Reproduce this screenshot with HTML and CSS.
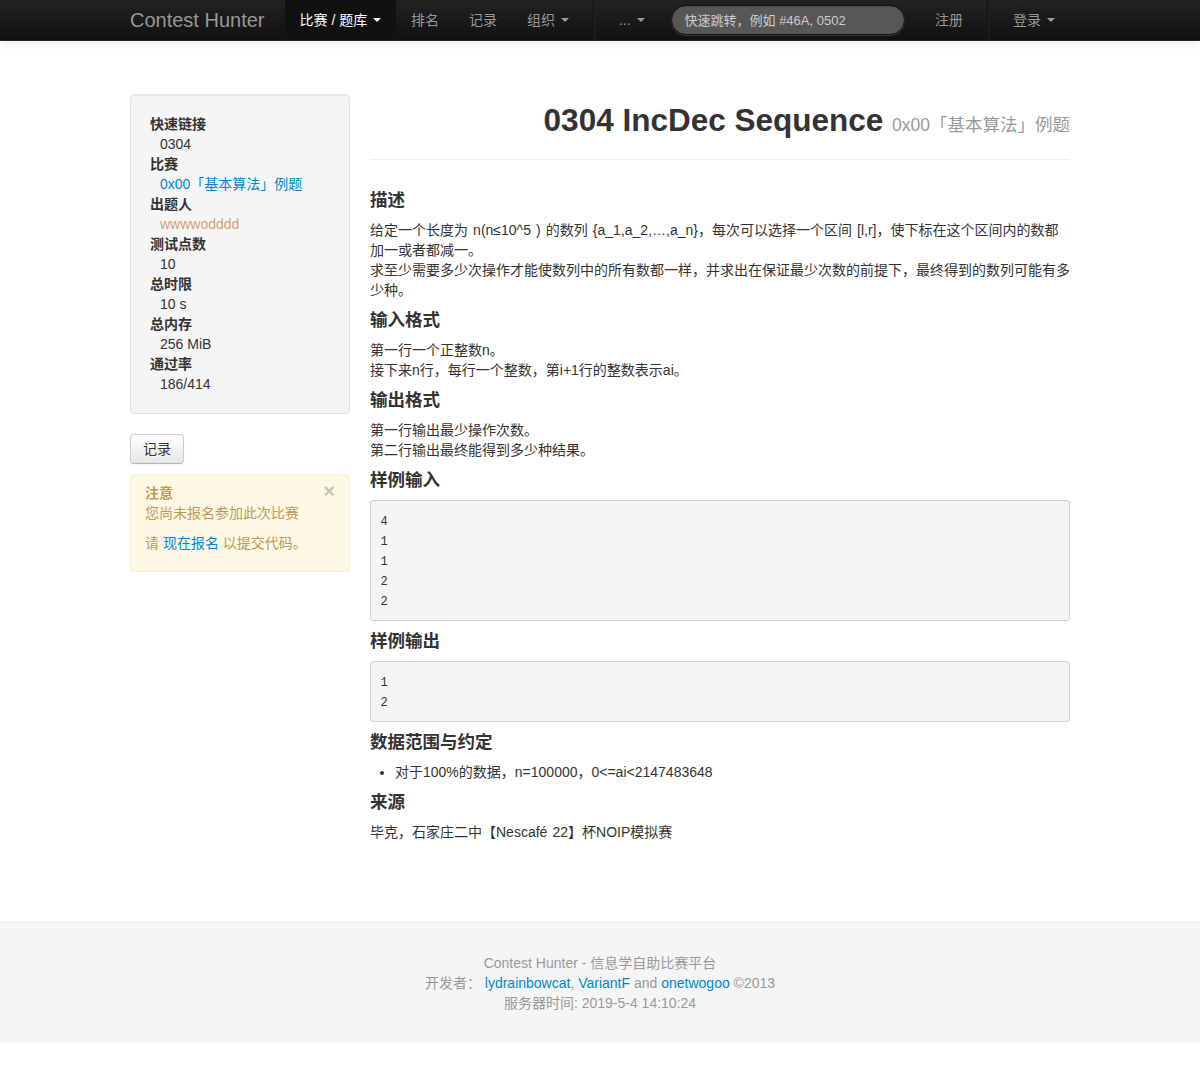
FILE: index.html
```html
<!DOCTYPE html>
<html lang="zh-CN">
<head>
<meta charset="utf-8">
<title>0304 IncDec Sequence - Contest Hunter</title>
<link rel="stylesheet" href="styles.css">
</head>
<body>
<div class="navbar">
  <div class="nav-inner">
    <a class="brand" href="#">Contest Hunter</a>
    <ul class="nav">
      <li class="active"><a href="#">比赛 / 题库 <b class="caret"></b></a></li>
      <li><a href="#">排名</a></li>
      <li><a href="#">记录</a></li>
      <li><a href="#">组织 <b class="caret"></b></a></li>
      <li class="divider-vertical"></li>
      <li><a href="#">... <b class="caret"></b></a></li>
    </ul>
    <form class="navbar-search">
      <input type="text" class="search-query" placeholder="快速跳转，例如 #46A, 0502">
    </form>
    <ul class="nav nav-right">
      <li><a href="#">注册</a></li>
      <li class="divider-vertical"></li>
      <li><a href="#">登录 <b class="caret"></b></a></li>
    </ul>
  </div>
</div>

<div class="container">
  <aside class="sidebar">
    <div class="well">
      <dl class="info">
        <dt>快速链接</dt>
        <dd>0304</dd>
        <dt>比赛</dt>
        <dd><a href="#">0x00「基本算法」例题</a></dd>
        <dt>出题人</dt>
        <dd class="author">wwwwodddd</dd>
        <dt>测试点数</dt>
        <dd>10</dd>
        <dt>总时限</dt>
        <dd>10 s</dd>
        <dt>总内存</dt>
        <dd>256 MiB</dd>
        <dt>通过率</dt>
        <dd>186/414</dd>
      </dl>
    </div>
    <div class="btn-row"><a class="btn" href="#">记录</a></div>
    <div class="alert">
      <button class="close" type="button">×</button>
      <strong>注意</strong>
      <div>您尚未报名参加此次比赛</div>
      <p>请 <a href="#">现在报名</a> 以提交代码。</p>
    </div>
  </aside>

  <main class="content">
    <div class="page-header">
      <h2>0304 IncDec Sequence <small>0x00「基本算法」例题</small></h2>
    </div>

    <h4>描述</h4>
    <p>给定一个长度为 n(n≤10^5 ) 的数列 {a_1,a_2,…,a_n}，每次可以选择一个区间 [l,r]，使下标在这个区间内的数都加一或者都减一。<br>求至少需要多少次操作才能使数列中的所有数都一样，并求出在保证最少次数的前提下，最终得到的数列可能有多少种。</p>

    <h4>输入格式</h4>
    <p>第一行一个正整数n。<br>接下来n行，每行一个整数，第i+1行的整数表示ai。</p>

    <h4>输出格式</h4>
    <p>第一行输出最少操作次数。<br>第二行输出最终能得到多少种结果。</p>

    <h4>样例输入</h4>
    <pre>4
1
1
2
2</pre>

    <h4>样例输出</h4>
    <pre>1
2</pre>

    <h4>数据范围与约定</h4>
    <ul>
      <li>对于100%的数据，n=100000，0&lt;=ai&lt;2147483648</li>
    </ul>

    <h4>来源</h4>
    <p>毕克，石家庄二中【Nescafé 22】杯NOIP模拟赛</p>
  </main>
</div>

<footer class="footer">
  <div>Contest Hunter - 信息学自助比赛平台</div>
  <div>开发者： <a href="#">lydrainbowcat</a>, <a href="#">VariantF</a> and <a href="#">onetwogoo</a> ©2013</div>
  <div>服务器时间: 2019-5-4 14:10:24</div>
</footer>
</body>
</html>
```

FILE: styles.css
```css
* { box-sizing: border-box; }

html, body {
  margin: 0;
  padding: 0;
}

body {
  font-family: "Liberation Sans", "Noto Sans CJK SC", sans-serif;
  font-size: 14px;
  line-height: 20px;
  color: #333;
  background: #fff;
}

a {
  color: #0088cc;
  text-decoration: none;
}

/* ---------- navbar ---------- */
.navbar {
  height: 41px;
  background: linear-gradient(to bottom, #222222, #111111);
  border-bottom: 1px solid #252525;
  box-shadow: 0 1px 10px rgba(0, 0, 0, 0.1);
}

.nav-inner {
  width: 940px;
  margin: 0 auto;
  display: flex;
  align-items: flex-start;
  height: 40px;
}

.brand {
  display: block;
  padding: 10px 20px;
  margin-left: -20px;
  font-size: 20px;
  line-height: 20px;
  font-weight: normal;
  color: #999;
  text-shadow: 0 -1px 0 rgba(0, 0, 0, 0.25);
}

.nav {
  list-style: none;
  margin: 0;
  padding: 0;
  display: flex;
}

.nav li a {
  display: block;
  padding: 10px 15px;
  line-height: 20px;
  color: #999;
  text-shadow: 0 -1px 0 rgba(0, 0, 0, 0.25);
}

.nav li.active a {
  background: #111;
  color: #fff;
}

.caret {
  display: inline-block;
  width: 0;
  height: 0;
  vertical-align: top;
  margin-top: 8px;
  margin-left: 2px;
  border-top: 4px solid #999;
  border-left: 4px solid transparent;
  border-right: 4px solid transparent;
}

.nav li.active .caret {
  border-top-color: #fff;
}

.divider-vertical {
  height: 40px;
  margin: 0 9px;
  border-left: 1px solid #111;
  border-right: 1px solid #222;
}

.navbar-search {
  margin: 5px 0 0 11px;
}

.search-query {
  width: 234px;
  height: 30px;
  padding: 4px 13px;
  font-family: "Liberation Sans", "Noto Sans CJK SC", sans-serif;
  font-size: 13px;
  line-height: 20px;
  color: #fff;
  background: #575757;
  border: 1px solid #111;
  border-radius: 15px;
  box-shadow: inset 0 1px 2px rgba(0, 0, 0, 0.1), 0 1px 0 rgba(255, 255, 255, 0.15);
  outline: none;
}

.search-query::placeholder {
  color: #ccc;
}

.nav-right {
  margin-left: auto;
}

/* ---------- layout ---------- */
.container {
  width: 940px;
  margin: 53px auto 0;
  display: grid;
  grid-template-columns: 220px 700px;
  column-gap: 20px;
  align-items: start;
}

/* ---------- sidebar ---------- */
.well {
  background: #f5f5f5;
  border: 1px solid #e3e3e3;
  border-radius: 4px;
  padding: 19px;
  box-shadow: inset 0 1px 1px rgba(0, 0, 0, 0.05);
  margin-bottom: 20px;
}

.info {
  margin: 0;
}

.info dt {
  font-weight: bold;
}

.info dd {
  margin-left: 10px;
}

.info dd.author {
  color: #d3a171;
}

.btn-row {
  margin-bottom: 10px;
}

.btn {
  display: inline-block;
  padding: 4px 12px;
  font-size: 14px;
  line-height: 20px;
  color: #333;
  text-shadow: 0 1px 1px rgba(255, 255, 255, 0.75);
  background: linear-gradient(to bottom, #ffffff, #e6e6e6);
  border: 1px solid #cccccc;
  border-bottom-color: #b3b3b3;
  border-radius: 4px;
  box-shadow: inset 0 1px 0 rgba(255, 255, 255, 0.2), 0 1px 2px rgba(0, 0, 0, 0.05);
}

.alert {
  padding: 8px 35px 8px 14px;
  background: #fcf8e3;
  border: 1px solid #fbeed5;
  border-radius: 4px;
  color: #c09853;
  text-shadow: 0 1px 0 rgba(255, 255, 255, 0.5);
}

.alert strong {
  display: block;
}

.alert p {
  margin: 10px 0;
}

.close {
  float: right;
  position: relative;
  top: -2px;
  right: -21px;
  padding: 0;
  border: 0;
  background: transparent;
  font-family: "Liberation Sans", sans-serif;
  font-size: 20px;
  font-weight: bold;
  line-height: 20px;
  color: #000;
  opacity: 0.2;
  text-shadow: 0 1px 0 #fff;
  cursor: pointer;
}

/* ---------- main ---------- */
.page-header {
  border-bottom: 1px solid #eee;
  padding-bottom: 9px;
  margin-bottom: 30px;
}

.page-header h2 {
  margin: 6px 0 10px;
  text-align: right;
  font-size: 31.5px;
  line-height: 40px;
  font-weight: bold;
  color: #333;
}

.page-header h2 small {
  font-size: 17.5px;
  font-weight: normal;
  color: #999;
  line-height: 1;
}

.content h4 {
  font-size: 17.5px;
  line-height: 20px;
  font-weight: bold;
  margin: 10px 0;
}

.content p {
  margin: 0;
  word-spacing: 1.2px;
}

.content pre {
  margin: 0;
  padding: 9.5px;
  font-family: "Liberation Mono", "DejaVu Sans Mono", monospace;
  font-size: 12px;
  line-height: 20px;
  color: #333;
  background: #f5f5f5;
  border: 1px solid rgba(0, 0, 0, 0.15);
  border-radius: 4px;
}

.content pre {
  padding-top: 10.5px;
  padding-bottom: 8.5px;
}

.content ul {
  margin: 0;
  padding-left: 25px;
}

/* ---------- footer ---------- */
.footer {
  margin-top: 80px;
  padding: 30px 0;
  background: #f5f5f5;
  border-top: 1px solid #e5e5e5;
  text-align: center;
  color: #999;
}
```
